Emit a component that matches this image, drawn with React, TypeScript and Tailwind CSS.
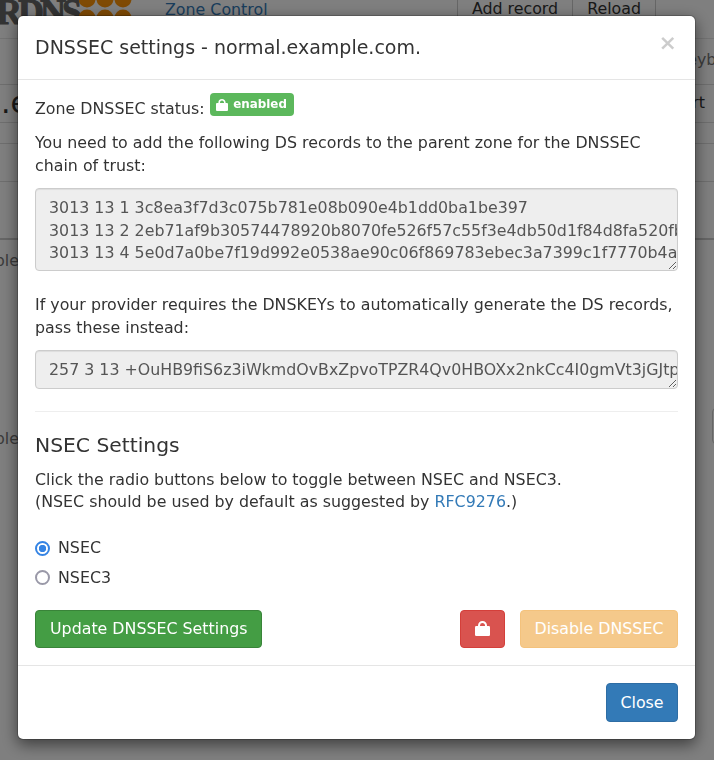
const dsRecords = [
  "3013 13 1 3c8ea3f7d3c075b781e08b090e4b1dd0ba1be397",
  "3013 13 2 2eb71af9b30574478920b8070fe526f57c55f3e4db50d1f84d8fa520fb7c2a9e4d1f",
  "3013 13 4 5e0d7a0be7f19d992e0538ae90c06f869783ebec3a7399c1f7770b4a2c51d8e07f3b",
].join("\n");

const dnskey =
  "257 3 13 +OuHB9fiS6z3iWkmdOvBxZpvoTPZR4Qv0HBOXx2nkCc4I0gmVt3jGJtpQ7mWvE2k9sYd";

function LockIcon({ className }: { className: string }) {
  return (
    <svg className={className} viewBox="0 0 15 15" fill="none">
      <path d="M4 6.5V4.4a3.5 3.4 0 0 1 7 0v2.1" stroke="currentColor" strokeWidth="2" />
      <rect x="0" y="5" width="15" height="10" rx="1.3" fill="currentColor" />
    </svg>
  );
}

function PageBehind() {
  return (
    <div className="h-[760px] overflow-hidden bg-white text-[#333]">
      <div className="flex h-[39px] items-start overflow-hidden border-b border-[#e7e7e7]">
        <span className="ml-[-4px] mt-[-6px] font-['Liberation_Serif',serif] text-[36px] leading-[36px] font-bold tracking-[-4px] text-[#666] [-webkit-text-stroke:1px_#666]">
          RDNS
        </span>
        <svg className="ml-[1px] shrink-0" width="56" height="39" viewBox="0 0 56 39">
          <circle cx="8" cy="-1" r="8.5" fill="#ff9408" />
          <circle cx="26" cy="-1" r="8.5" fill="#ff9408" />
          <circle cx="44" cy="-1" r="8.5" fill="#ff9408" />
          <circle cx="8" cy="18" r="8.5" fill="#ff9408" />
          <circle cx="26" cy="18" r="8.5" fill="#ff9408" />
          <circle cx="44" cy="18" r="8.5" fill="#ff9408" />
        </svg>
        <span className="ml-[30px] mt-[-1px] text-[15.84px] leading-[22px] text-[#337ab7]">Zone Control</span>
        <div className="ml-auto mr-[58px] flex h-[18px] border-l border-r border-[#ccc] text-[15.84px] leading-[18px]">
          <span className="border-r border-[#ccc] px-[14px]">Add record</span>
          <span className="px-[14px]">Reload</span>
        </div>
      </div>
      <div className="flex h-[46px] justify-end border-b border-[#ddd] pt-[10px] text-[15.84px] leading-[22px] text-[#777]">
        <span className="mr-[-12px]">keybo</span>
      </div>
      <div className="flex h-[38px] items-center justify-between border-b border-[#ddd]">
        <span className="ml-[1px] text-[30px]">.e</span>
        <span className="mr-[9px] text-[15.84px]">art</span>
      </div>
      <div className="h-[21px] border-b border-[#ddd]" />
      <div className="h-[38px] border-b border-[#ddd]" />
      <div className="h-[58px] border-b-2 border-[#ccc]" />
      <div className="ml-[-22px] mt-[10px] h-[178px] text-[15.84px] leading-[22px] text-[#777]">Table</div>
      <div className="flex items-start justify-between">
        <span className="ml-[-22px] text-[15.84px] leading-[22px] text-[#777]">Table</span>
        <span className="mr-[-40px] mt-[-20px] h-9 w-[42px] rounded border border-[#ccc]" />
      </div>
    </div>
  );
}

function App() {
  return (
    <div className="font-['DejaVu_Sans',sans-serif] text-[15.84px] leading-[22.63px]">
      <PageBehind />
      <div className="fixed inset-0 bg-black/50">
        <div className="ml-[17px] mt-[15px] w-[679px] rounded-md border border-black/20 bg-white bg-clip-padding text-[#333] shadow-[0_5px_15px_rgba(0,0,0,0.5)]">
          <div className="flex items-start justify-between border-b border-[#e5e5e5] pl-[17px] pr-[18px] pt-[15px] pb-[16px]">
            <h4 className="text-[19px] leading-[32px]">DNSSEC settings - normal.example.com.</h4>
            <span className="text-[22px] leading-[24px] font-bold text-black/20">×</span>
          </div>

          <div className="px-[17px] pt-[16px] pb-[17px]">
            <p className="mb-[12px]">
              Zone DNSSEC status:{" "}
              <span className="relative top-[-3px] inline-flex h-[23px] w-[84px] items-center justify-center gap-[5px] rounded bg-[#5cb85c] text-[11.88px] leading-none font-bold text-white">
                <LockIcon className="h-[12px] w-[12px]" />
                enabled
              </span>
            </p>
            <p className="mb-[11px]">
              You need to add the following DS records to the parent zone for the DNSSEC chain of trust:
            </p>
            <textarea
              readOnly
              rows={3}
              wrap="off"
              value={dsRecords}
              className="mb-[23px] block h-[83px] w-full overflow-hidden rounded border border-[#ccc] bg-[#eee] px-[13px] py-[8px] leading-[22.5px] text-[#555] shadow-[inset_0_1px_1px_rgba(0,0,0,0.075)] outline-none"
            />
            <p className="mb-[10px]">
              If your provider requires the DNSKEYs to automatically generate the DS records, pass these instead:
            </p>
            <textarea
              readOnly
              rows={1}
              wrap="off"
              value={dnskey}
              className="block h-[39px] w-full overflow-hidden rounded border border-[#ccc] bg-[#eee] px-[13px] py-[8px] leading-[22.5px] text-[#555] shadow-[inset_0_1px_1px_rgba(0,0,0,0.075)] outline-none"
            />
            <hr className="mt-[22px] mb-[21px] border-[#eee]" />
            <h4 className="mb-[12px] text-[20.3px] leading-[24px]">NSEC Settings</h4>
            <p className="mb-[23px]">
              Click the radio buttons below to toggle between NSEC and NSEC3.
              <br />
              (NSEC should be used by default as suggested by{" "}
              <a href="#rfc" className="text-[#337ab7]">
                RFC9276
              </a>
              .)
            </p>
            <div className="mb-[7px] flex flex-col gap-[7px]">
              <label className="flex items-center gap-2">
                <input
                  type="radio"
                  name="nsec"
                  defaultChecked
                  className="m-0 h-[15px] w-[15px] appearance-none rounded-full border-2 border-[#9a99a8] checked:border-[#3584e4] checked:bg-[radial-gradient(circle,#3584e4_0,#3584e4_3.4px,#fff_4px)]"
                />
                NSEC
              </label>
              <label className="flex items-center gap-2">
                <input
                  type="radio"
                  name="nsec"
                  className="m-0 h-[15px] w-[15px] appearance-none rounded-full border-2 border-[#9a99a8] checked:border-[#3584e4] checked:bg-[radial-gradient(circle,#3584e4_0,#3584e4_3.4px,#fff_4px)]"
                />
                NSEC3
              </label>
            </div>
            <div className="mt-[21px] flex items-center">
              <button className="h-[38px] rounded border border-[#398439] bg-[#449d44] px-[14px] pt-px text-white">
                Update DNSSEC Settings
              </button>
              <button className="ml-auto flex h-[38px] w-[45px] items-center justify-center rounded border border-[#d43f3a] bg-[#d9534f] pb-[2px] text-white">
                <LockIcon className="h-[15px] w-[15px]" />
              </button>
              <button
                disabled
                className="ml-[15px] h-[38px] w-[158px] rounded border border-[#eea236] bg-[#f0ad4e] pt-px text-white opacity-65"
              >
                Disable DNSSEC
              </button>
            </div>
          </div>

          <div className="flex justify-end border-t border-[#e5e5e5] px-[17px] pt-[17px] pb-[17px]">
            <button className="h-[39px] w-[72px] rounded border border-[#2e6da4] bg-[#337ab7] pt-px text-white">
              Close
            </button>
          </div>
        </div>
      </div>
    </div>
  );
}

export default App;
